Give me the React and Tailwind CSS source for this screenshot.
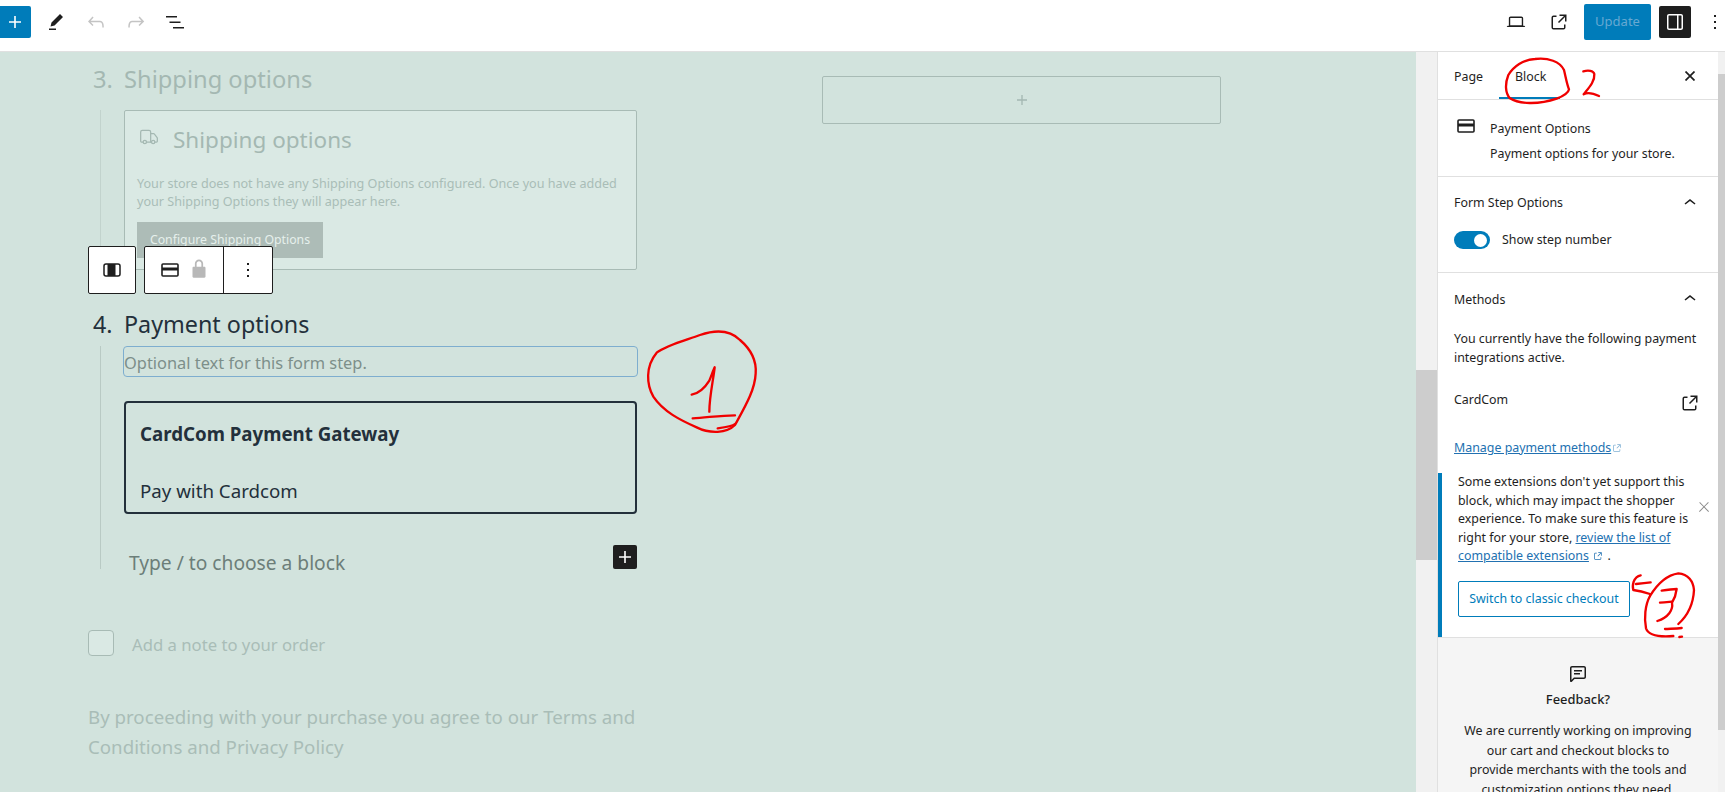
import React from "react";
import { Truck } from "lucide-react";

const I = ({ d, className = "", size = 24, fill = "currentColor" }) => (
  <svg width={size} height={size} viewBox="0 0 24 24" fill={fill} className={className}>
    {(Array.isArray(d) ? d : [d]).map((p, i) => <path key={i} d={p} />)}
  </svg>
);
const icons = {
  plus: "M18 11.2h-5.2V6h-1.6v5.2H6v1.6h5.2V18h1.6v-5.2H18z",
  pen: "m19 7-3-3-8.5 8.5-1 4 4-1L19 7Zm-7 11.5H5V20h7v-1.5Z",
  undo: "M18.3 11.7c-.6-.6-1.4-.9-2.3-.9H6.7l2.9-3.3-1.1-1-4.5 5L8.5 16l1-1-2.7-2.7H16c.5 0 .9.2 1.3.5 1 1 1 3.4 1 4.5v.3h1.5v-.2c0-1.5 0-4.3-1.5-5.7z",
  redo: "M15.6 6.5l-1.1 1 2.9 3.3H8c-.9 0-1.7.3-2.3.9-1.4 1.5-1.4 4.2-1.4 5.6v.2h1.5v-.3c0-1.1 0-3.5 1-4.5.3-.3.7-.5 1.3-.5h9.2L14.5 15l1.1 1.1 4.6-4.6-4.6-5z",
  list: "M3 6h11v1.5H3V6Zm3.5 5.5h11V13h-11v-1.5ZM21 17H10v1.5h11V17Z",
  laptop: "M20.5 16h-.7V8c0-1.1-.9-2-2-2H6.2c-1.1 0-2 .9-2 2v8h-.7c-.8 0-1.5.7-1.5 1.5h20c0-.8-.7-1.5-1.5-1.5zM5.7 8c0-.3.2-.5.5-.5h11.6c.3 0 .5.2.5.5v7.6H5.7V8z",
  ext: "M19.5 4.5h-7V6h4.44l-5.97 5.97 1.06 1.06L18 7.06v4.44h1.5v-7Zm-13 1a2 2 0 0 0-2 2v10a2 2 0 0 0 2 2h10a2 2 0 0 0 2-2v-3H17v3a.5.5 0 0 1-.5.5h-10a.5.5 0 0 1-.5-.5v-10a.5.5 0 0 1 .5-.5h3V5.5h-3Z",
  sidebar: "M18 4H6c-1.1 0-2 .9-2 2v12c0 1.1.9 2 2 2h12c1.1 0 2-.9 2-2V6c0-1.1-.9-2-2-2zm-4 14.5H6c-.3 0-.5-.2-.5-.5V6c0-.3.2-.5.5-.5h8v13zm4.5-.5c0 .3-.2.5-.5.5h-2.5v-13H18c.3 0 .5.2.5.5v12z",
  more: "M13 19h-2v-2h2v2zm0-6h-2v-2h2v2zm0-6h-2V5h2v2z",
  close: "M13 11.8l6.1-6.3-1-1-6.1 6.2-6.1-6.2-1 1 6.1 6.3-6.5 6.7 1 1 6.5-6.6 6.5 6.6 1-1z",
  up: "M6.5 12.4L12 8l5.5 4.4-.9 1.2L12 10l-4.5 3.6-1-1.2z",
  lock: "M17 10h-1.2V7c0-2.1-1.7-3.8-3.8-3.8-2.1 0-3.8 1.7-3.8 3.8v3H7c-.6 0-1 .4-1 1v8c0 .6.4 1 1 1h10c.6 0 1-.4 1-1v-8c0-.6-.4-1-1-1zm-2.8 0H9.8V7c0-1.2 1-2.2 2.2-2.2s2.2 1 2.2 2.2v3z",
  comment: ["M18 4H6c-1.1 0-2 .9-2 2v12.9c0 .6.5 1.1 1.1 1.1.3 0 .5-.1.8-.3L8.5 17H18c1.1 0 2-.9 2-2V6c0-1.1-.9-2-2-2zm.5 11c0 .3-.2.5-.5.5H7.9l-2.4 2.4V6c0-.3.2-.5.5-.5h12c.3 0 .5.2.5.5v9z", "M8 8h8v1.5H8zM8 11h6v1.5H8z"],
};

const CardIcon = () => (
  <svg width="18" height="14" viewBox="0 0 18 14" fill="none">
    <rect x="1" y="1" width="16" height="12" rx="1" stroke="#1e1e1e" strokeWidth="1.6" />
    <rect x="1" y="4.5" width="16" height="3" fill="#1e1e1e" />
  </svg>
);

const Stroke = ({ children, w, h, vb, className }) => (
  <svg width={w} height={h} viewBox={vb} fill="none" stroke="#f00000" strokeWidth="7" strokeLinecap="round" strokeLinejoin="round" className={className}>
    {children}
  </svg>
);

const ExtSmall = ({ className = "" }) => (
  <I d={icons.ext} size={12} className={"inline-block align-[-2px] " + className} />
);

export default function App() {
  return (
    <div className="w-full h-[792px] overflow-hidden bg-white flex flex-col relative text-[#1e1e1e]" style={{ fontFamily: '"Noto Sans", sans-serif' }}>
      {/* Top bar */}
      <header className="h-[52px] shrink-0 bg-white border-b border-[#e0e0e0] flex items-center">
        <div className="w-[31px] h-[32px] -mt-[8px] bg-[#007cba] rounded-r-[2px] flex items-center justify-center text-white pr-[1px]">
          <I d={icons.plus} size={24} />
        </div>
        <I d={icons.pen} size={24} className="ml-[13px] -mt-[8px]" />
        <I d={icons.undo} size={24} className="ml-[16px] -mt-[8px] text-[#c4c4c4]" />
        <I d={icons.redo} size={24} className="ml-[16px] -mt-[8px] text-[#c4c4c4]" />
        <I d={icons.list} size={24} className="ml-[15px] -mt-[8px]" />
        <div className="flex-1" />
        <I d={icons.laptop} size={22} className="-mt-[8px]" />
        <I d={icons.ext} size={24} className="ml-[20px] -mt-[8px]" />
        <div className="ml-[13px] -mt-[8px] w-[67px] h-[36px] rounded-[2px] bg-[#007cba] text-[#66a9d2] text-[13px] flex items-center justify-center">Update</div>
        <div className="ml-[8px] -mt-[8px] w-[32px] h-[32px] rounded-[2px] bg-[#1e1e1e] text-white flex items-center justify-center">
          <I d={icons.sidebar} size={24} />
        </div>
        <I d={icons.more} size={24} className="ml-[12px] mr-[-2px] -mt-[8px]" />
      </header>

      <div className="flex-1 flex min-h-0">
        {/* Canvas */}
        <main className="flex-1 bg-[#d2e3dd] relative overflow-hidden flex items-start">
          <div className="ml-[88px] w-[549px] shrink-0">
            {/* Step 3 */}
            <div className="h-[58px] flex items-center text-[23.7px] leading-[32px] text-[#a4b8b2] pl-[5px] pb-[4px]">
              <span className="w-[31px]">3.</span><span>Shipping options</span>
            </div>
            <div className="ml-[12px] border-l border-[#c2d3cd] pl-[23px]">
              <div className="h-[160px] border border-[#a8bbb5] rounded-[2px] bg-[#dae9e4] pl-[12px] pr-[12px]">
                <div className="flex items-center h-[56px] mt-[1px] text-[#a4b8b2]">
                  <Truck size={20} strokeWidth={1.5} className="ml-[2px] -mt-[6px]" />
                  <span className="ml-[14px] text-[22.5px] leading-[32px]">Shipping options</span>
                </div>
                <p className="mt-[7px] text-[12.6px] leading-[18px] text-[#a9bdb7] whitespace-nowrap">
                  Your store does not have any Shipping Options configured. Once you have added<br />your Shipping Options they will appear here.
                </p>
                <div className="mt-[11px] w-[186px] h-[36px] bg-[#adbcb7] text-[#e6f0ec] text-[12.3px] flex items-center justify-center">Configure Shipping Options</div>
              </div>
            </div>
            {/* Step 4 */}
            <div className="mt-[32px] flex items-center text-[23.3px] leading-[44px] h-[44px] pl-[5px] text-[#23303b]">
              <span className="w-[31px]">4.</span><span>Payment options</span>
            </div>
            <div className="ml-[12px] border-l border-[#b9cac4] pl-[23px] h-[223px]">
              <div className="h-[31px] -mx-[1px] border border-[#7eaecf] rounded-[4px] text-[16.4px] leading-[31px] text-[#7d8f8a] whitespace-nowrap">Optional text for this form step.</div>
              <div className="mt-[24px] h-[113px] border-2 border-[#23303b] rounded-[4px] pl-[14px] text-[#23303b]">
                <div className="mt-[18px] text-[18.7px] leading-[26px] font-bold">CardCom Payment Gateway</div>
                <div className="mt-[31px] text-[18.7px] leading-[26px]">Pay with Cardcom</div>
              </div>
              <div className="flex mt-[31px] h-[24px]">
                <span className="ml-[5px] mt-[5px] flex-1 text-[19.2px] leading-[26px] text-[#6c7e79] whitespace-nowrap">Type / to choose a block</span>
                <div className="w-[24px] h-[24px] bg-[#1e1e1e] rounded-[2px] text-white flex items-center justify-center">
                  <I d={icons.plus} size={24} />
                </div>
              </div>
            </div>
            <div className="mt-[61px] flex items-center h-[26px]">
              <div className="w-[26px] h-[26px] border border-[#a8bbb5] rounded-[4px] bg-[#dae9e4]" />
              <span className="ml-[18px] mt-[4px] text-[16.7px] text-[#a9bdb7]">Add a note to your order</span>
            </div>
            <p className="mt-[46px] text-[18.7px] leading-[30px] text-[#a9bdb7] whitespace-nowrap">
              By proceeding with your purchase you agree to our Terms and<br />Conditions and Privacy Policy
            </p>
          </div>
          <div className="ml-[185px] mt-[24px] w-[399px] h-[48px] border border-[#a8bbb5] rounded-[2px] flex items-center justify-center text-[#a4b8b2] shrink-0">
            <I d={icons.plus} size={20} />
          </div>

          {/* Block toolbar */}
          <div className="absolute left-[88px] top-[194px] flex gap-[8px]">
            <div className="w-[48px] h-[48px] bg-white border border-[#1e1e1e] rounded-[2px] flex items-center justify-center">
              <svg width="18" height="14" viewBox="0 0 18 14" fill="none">
                <rect x="1" y="1" width="16" height="12" rx="2" stroke="#1e1e1e" strokeWidth="1.5" />
                <rect x="4.5" y="1" width="8" height="12" fill="#1e1e1e" />
              </svg>
            </div>
            <div className="h-[48px] bg-white border border-[#1e1e1e] rounded-[2px] flex">
              <div className="w-[78px] flex items-center pl-[16px]">
                <CardIcon />
                <I d={icons.lock} size={26} className="ml-[7px] -mt-[2px] text-[#b8b8b8]" />
              </div>
              <div className="w-[49px] border-l border-[#1e1e1e] flex items-center justify-center">
                <I d={icons.more} size={24} />
              </div>
            </div>
          </div>

          {/* Annotation 1 */}
          <Stroke w={150} h={130} vb="0 0 450 390" className="absolute left-[620px] top-[258px]">
            <path d="M110 128 C140 105 200 90 240 75 C290 58 330 60 360 90 C395 120 410 150 407 190 C405 240 375 290 345 345 C320 370 270 372 230 352 C180 330 130 305 100 260 C80 225 75 170 110 128Z" />
            <path d="M215 254 C240 250 258 228 268 212 C275 195 280 180 284 172 C280 210 268 260 268 305" />
            <path d="M218 325 C260 323 300 316 345 316" />
            <path d="M293 355 C315 352 340 347 345 342" />
          </Stroke>
        </main>

        {/* Canvas scrollbar */}
        <div className="w-[21px] bg-[#f1f1f1] shrink-0 pt-[318px]">
          <div className="h-[190px] bg-[#cdcdcd]" />
        </div>

        {/* Sidebar */}
        <aside className="w-[281px] shrink-0 bg-white border-l border-[#e0e0e0] text-[12.4px] leading-[18px] relative">
          <div className="h-[48px] border-b border-[#e0e0e0] flex items-start relative">
            <span className="ml-[16px] mt-[16px] text-[#1e1e1e]">Page</span>
            <div className="ml-[16px] w-[61px] h-[47px] border-b-2 border-[#007cba] pt-[16px] pl-[16px]">Block</div>
            <div className="flex-1" />
            <svg width="10" height="10" viewBox="0 0 10 10" className="mr-[23px] mt-[19px]" stroke="#1e1e1e" strokeWidth="1.7"><path d="M.5.5l9 9M9.5.5l-9 9" /></svg>
          </div>
          <div className="h-[77px] border-b border-[#e0e0e0] pl-[19px] pt-[20px] flex">
            <div className="-mt-[1px]"><CardIcon /></div>
            <div className="ml-[15px]">
              <div>Payment Options</div>
              <div className="mt-[7px]">Payment options for your store.</div>
            </div>
          </div>
          <div className="h-[96px] border-b border-[#e0e0e0] px-[16px] pt-[14px]">
            <div className="flex justify-between items-center">
              <span>Form Step Options</span>
              <I d={icons.up} size={24} />
            </div>
            <div className="flex items-center mt-[16px]">
              <div className="w-[36px] h-[18px] rounded-full bg-[#007cba] flex items-center justify-end pr-[3px]">
                <div className="w-[13px] h-[13px] bg-white rounded-full" />
              </div>
              <span className="ml-[12px]">Show step number</span>
            </div>
          </div>
          <div className="px-[16px] pt-[14px]">
            <div className="flex justify-between items-center">
              <span className="mt-[1px]">Methods</span>
              <I d={icons.up} size={24} />
            </div>
            <p className="mt-[18px] leading-[19px]">You currently have the following payment<br />integrations active.</p>
            <div className="mt-[23px] flex justify-between items-start">
              <span className="leading-[20px]">CardCom</span>
              <I d={icons.ext} size={24} className="mt-[1px]" />
            </div>
            <div className="mt-[23px] leading-[20px] text-[#2271b1]">
              <span className="underline">Manage payment methods</span> <ExtSmall className="-ml-[3px] text-[#7fb0d4]" />
            </div>
          </div>
          <div className="mt-[15px] h-[164px] border-l-4 border-[#007cba] pl-[16px] relative">
            <p className="leading-[18.5px] whitespace-nowrap">
              Some extensions don't yet support this<br />block, which may impact the shopper<br />experience. To make sure this feature is<br />right for your store, <span className="underline text-[#2271b1]">review the list of</span><br /><span className="underline text-[#2271b1]">compatible extensions</span> <ExtSmall className="text-[#2271b1]" /> .
            </p>
            <div className="mt-[15px] w-[172px] h-[36px] border border-[#007cba] rounded-[2px] text-[#007cba] flex items-center justify-center">Switch to classic checkout</div>
            <I d={icons.close} size={16} className="absolute right-[6px] top-[26px] text-[#8a8a8a]" />
          </div>
          <div className="bg-[#f5f5f5] border-t border-[#e0e0e0] h-[200px] px-[20px] pt-[24px] text-center">
            <div className="flex justify-center"><I d={icons.comment} size={24} /></div>
            <div className="mt-[3px] text-[12.9px] font-medium leading-[20px]">Feedback?</div>
            <p className="mt-[12px] leading-[19.5px] whitespace-nowrap">
              We are currently working on improving<br />our cart and checkout blocks to<br />provide merchants with the tools and<br />customization options they need.
            </p>
          </div>
          {/* Annotation 2 */}
          <Stroke w={300} h={180} vb="0 0 900 540" className="absolute -left-[13px] -top-[52px] pointer-events-none">
            <path d="M395 296 C410 290 430 280 432 268 C425 250 422 230 417 210 C405 185 370 172 330 177 C295 178 265 200 250 225 C240 250 240 280 255 295 C280 312 340 315 395 296Z" />
            <path d="M475 214 C490 210 505 212 508 222 C510 245 490 265 476 283 C490 275 505 280 522 288" />
          </Stroke>
          {/* Annotation 3 */}
          <Stroke w={100} h={85} vb="0 0 300 255" className="absolute left-[172px] top-[508px] pointer-events-none">
            <path d="M120 108 C140 75 170 45 205 40 C235 42 250 65 252 90 C250 130 235 165 205 192" />
            <path d="M120 108 C105 135 102 175 108 205 C115 225 140 232 190 228" />
            <path d="M155 92 C170 90 185 88 200 87 C198 105 192 118 186 128 C190 150 175 172 142 183" />
            <path d="M150 128 C162 127 175 126 186 125" />
            <path d="M165 207 C180 206 198 206 215 204" />
            <path d="M208 231 L216 230" />
            <path d="M92 46 C82 48 75 55 71 65 C68 75 68 85 70 90 C85 92 105 97 120 102" />
            <path d="M78 72 C92 70 108 68 122 67" />
          </Stroke>
        </aside>

        {/* Sidebar scrollbar */}
        <div className="w-[7px] bg-[#f1f1f1] shrink-0 pt-[22px]">
          <div className="h-[656px] bg-[#cdcdcd]" />
        </div>
      </div>
    </div>
  );
}
